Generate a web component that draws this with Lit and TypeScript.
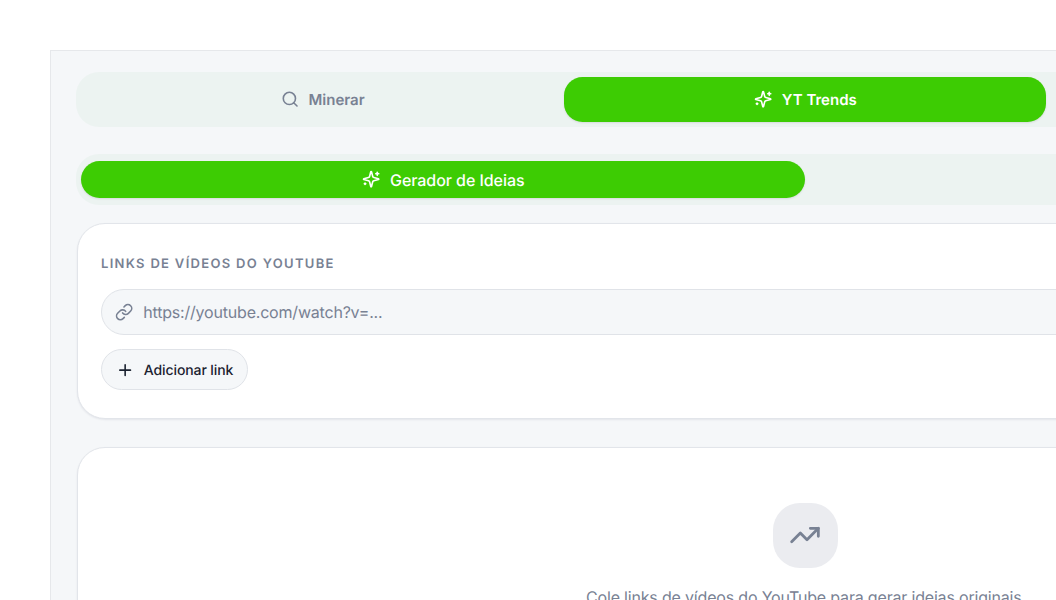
import { html, css, svg, LitElement } from 'lit';
import { customElement, property } from 'lit/decorators.js';

const ICONS = {
  search: svg`<path d="m21 21-4.34-4.34"/><circle cx="11" cy="11" r="8"/>`,
  sparkles: svg`
    <path d="M9.937 15.5A2 2 0 0 0 8.5 14.063l-6.135-1.582a.5.5 0 0 1 0-.962L8.5 9.936A2 2 0 0 0 9.937 8.5l1.582-6.135a.5.5 0 0 1 .963 0L14.063 8.5A2 2 0 0 0 15.5 9.937l6.135 1.581a.5.5 0 0 1 0 .964L15.5 14.063a2 2 0 0 0-1.437 1.437l-1.582 6.135a.5.5 0 0 1-.963 0z"/>
    <path d="M20 3v4"/><path d="M22 5h-4"/><path d="M4 17v2"/><path d="M5 18H3"/>`,
  link: svg`
    <path d="M10 13a5 5 0 0 0 7.54.54l3-3a5 5 0 0 0-7.07-7.07l-1.72 1.71"/>
    <path d="M14 11a5 5 0 0 0-7.54-.54l-3 3a5 5 0 0 0 7.07 7.07l1.71-1.71"/>`,
  plus: svg`<path d="M5 12h14"/><path d="M12 5v14"/>`,
  trending: svg`<path d="M16 7h6v6"/><path d="m22 7-8.5 8.5-5-5L2 17"/>`,
};

@customElement('line-icon')
export class LineIcon extends LitElement {
  static styles = css`
    :host {
      display: block;
      flex: none;
      width: 18.3px;
      height: 18.3px;
    }
    svg {
      display: block;
      width: 100%;
      height: 100%;
      fill: none;
      stroke: currentColor;
      stroke-width: 2.1;
      stroke-linecap: round;
      stroke-linejoin: round;
    }
  `;

  @property() name: keyof typeof ICONS = 'search';

  render() {
    return html`<svg viewBox="0 0 24 24" aria-hidden="true">${ICONS[this.name]}</svg>`;
  }
}

@customElement('app-root')
export class AppRoot extends LitElement {
  static styles = css`
    :host {
      display: block;
      box-sizing: border-box;
      height: 600px;
      padding: 50px 0 0 50px;
      overflow: hidden;
      background: #fff;
      color: #1b2230;
      font-family: Inter, sans-serif;
      font-size: 16px;
      text-rendering: geometricPrecision;
    }
    * {
      box-sizing: border-box;
    }
    button,
    input {
      margin: 0;
      border: 0;
      background: none;
      color: inherit;
      font: inherit;
      letter-spacing: inherit;
      text-rendering: inherit;
    }
    .panel {
      width: 1509px;
      height: 700px;
      padding: 21px 25.4px 0;
      border-top: 1px solid #e6e8eb;
      border-left: 1px solid #e6e8eb;
      background: #f5f7f9;
    }
    .tabs {
      display: grid;
      border-radius: 23px;
      background: #ecf3f1;
    }
    .main-tabs {
      grid-template-columns: repeat(3, 1fr);
      height: 55px;
      padding: 4.5px 4.5px 5px;
    }
    .sub-tabs {
      grid-template-columns: repeat(2, 1fr);
      height: 51px;
      margin-top: 27px;
      padding: 7px 4.5px;
    }
    .tab {
      display: flex;
      align-items: center;
      justify-content: center;
      gap: 9.5px;
      padding: 0 0 0 0.8px;
      border-radius: 18.5px;
      color: #788193;
    }
    .main-tabs .tab {
      font-size: 15px;
      font-weight: 600;
    }
    .sub-tabs .tab {
      font-size: 16px;
      font-weight: 500;
      letter-spacing: -0.06px;
    }
    .tab.active {
      background: #3dcc03;
      color: #fff;
      box-shadow: 0 1px 2px rgba(30, 20, 50, 0.1);
    }
    .card {
      margin-left: 0.6px;
      border: 1px solid #e2e5ea;
      border-radius: 28px;
      background: #fff;
      box-shadow: 0 1px 2px rgba(20, 30, 60, 0.08);
    }
    .links {
      height: 196px;
      margin-top: 18px;
      padding: 31px 23px 0;
    }
    .label {
      display: block;
      color: #788193;
      font-size: 13px;
      font-weight: 600;
      line-height: 18px;
      letter-spacing: 1.31px;
    }
    .field {
      display: flex;
      align-items: center;
      gap: 10px;
      height: 46px;
      margin-top: 16px;
      padding: 0 13px;
      border: 1px solid #e0e3e8;
      border-radius: 23px;
      background: #f5f7f9;
      color: #788193;
    }
    .field input {
      flex: 1;
      padding: 0;
      outline: none;
      letter-spacing: -0.2px;
    }
    .field input::placeholder {
      color: #788193;
    }
    .add {
      display: flex;
      align-items: center;
      gap: 9.5px;
      width: 147px;
      height: 41px;
      margin-top: 14px;
      padding: 1px 0 0 14px;
      border: 1px solid #e0e3e8;
      border-radius: 21px;
      background: #f5f7f9;
      font-size: 14px;
      font-weight: 500;
      letter-spacing: -0.1px;
      white-space: nowrap;
    }
    .empty {
      display: flex;
      flex-direction: column;
      align-items: center;
      height: 300px;
      margin-top: 28px;
      padding-top: 55px;
    }
    .badge {
      display: grid;
      place-items: center;
      width: 64.5px;
      height: 64.5px;
      border-radius: 27px;
      background: #ebecf0;
      color: #788193;
    }
    .badge line-icon {
      width: 32px;
      height: 32px;
    }
    .empty p {
      margin: 18px 3px 0 0;
      color: #788193;
      line-height: 23px;
      letter-spacing: -0.18px;
    }
  `;

  render() {
    return html`
      <main class="panel">
        <nav class="tabs main-tabs">
          <button class="tab"><line-icon name="search"></line-icon>Minerar</button>
          <button class="tab active"><line-icon name="sparkles"></line-icon>YT Trends</button>
        </nav>
        <nav class="tabs sub-tabs">
          <button class="tab active"><line-icon name="sparkles"></line-icon>Gerador de Ideias</button>
        </nav>
        <section class="card links">
          <label class="label" for="url">LINKS DE VÍDEOS DO YOUTUBE</label>
          <div class="field">
            <line-icon name="link"></line-icon>
            <input id="url" placeholder="https://youtube.com/watch?v=..." />
          </div>
          <button class="add"><line-icon name="plus"></line-icon>Adicionar link</button>
        </section>
        <section class="card empty">
          <div class="badge"><line-icon name="trending"></line-icon></div>
          <p>Cole links de vídeos do YouTube para gerar ideias originais</p>
        </section>
      </main>
    `;
  }
}
